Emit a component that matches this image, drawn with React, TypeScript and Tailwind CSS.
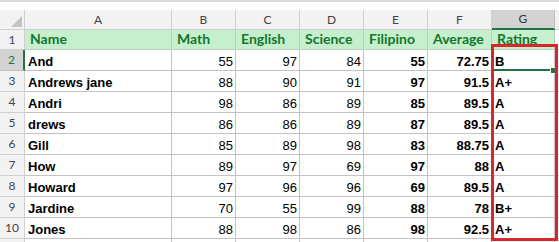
import React from "react";

type Row = [string, string, string, string, string, string, string];

const HEADERS: Row = ["Name", "Math", "English", "Science", "Filipino", "Average", "Rating"];

const ROWS: Row[] = [
  ["And", "55", "97", "84", "55", "72.75", "B"],
  ["Andrews jane", "88", "90", "91", "97", "91.5", "A+"],
  ["Andri", "98", "86", "89", "85", "89.5", "A"],
  ["drews", "86", "86", "89", "87", "89.5", "A"],
  ["Gill", "85", "89", "98", "83", "88.75", "A"],
  ["How", "89", "97", "69", "97", "88", "A"],
  ["Howard", "97", "96", "96", "69", "89.5", "A"],
  ["Jardine", "70", "55", "99", "88", "78", "B+"],
  ["Jones", "88", "98", "86", "98", "92.5", "A+"],
];

const LETTERS = ["A", "B", "C", "D", "E", "F", "G"];

// which data columns are bold / left aligned
const BOLD = [true, false, false, false, true, true, true];
const LEFT = [true, false, false, false, false, false, true];

const headCell = "border-r border-b border-[#d0d0d0] bg-[#f2f2f2] flex items-center justify-center text-[12px] text-[#444] font-['Lato',sans-serif]";
const gridCell = "border-r border-b border-[#c3c3c3] flex items-end pb-[1px] leading-[15px] text-[13px] text-black font-['Liberation_Sans',Arial,sans-serif] whitespace-nowrap";

export default function App() {
  return (
    <div className="relative w-[559px] h-[242px] overflow-hidden bg-white select-none">
      {/* strip above the column letters */}
      <div className="h-[10px] border-t-2 border-[#dadada] bg-white" />

      <div className="relative grid grid-cols-[25px_147px_64px_64px_64px_64px_64px_63px_1fr] grid-rows-[20px_20px_repeat(9,21px)_20px]">
        {/* corner */}
        <div className="border-r border-b border-[#d0d0d0] bg-[#f2f2f2] flex items-end justify-end pr-[2px] pb-[2px]">
          <svg width="11" height="11" viewBox="0 0 11 11">
            <polygon points="11,0 11,11 0,11" fill="#c4c4c4" />
          </svg>
        </div>
        {LETTERS.map((l) =>
          l === "G" ? (
            <div key={l} className="border-r border-b-2 border-r-[#c0c0c0] border-b-[#217346] bg-[#d3d3d3] flex items-center justify-center text-[12px] text-[#333] font-['Lato',sans-serif]">
              {l}
            </div>
          ) : (
            <div key={l} className={headCell}>
              {l}
            </div>
          )
        )}
        <div className="border-b border-[#d0d0d0] bg-[#f2f2f2]" />

        {/* row 1: titles */}
        <div className={headCell}>1</div>
        {HEADERS.map((h) => (
          <div
            key={h}
            className="border-r border-b border-[#b9cfbd] bg-[#c6efce] flex items-end pb-[2px] pl-[5px] leading-[17px] text-[14px] font-bold text-[#12772a] font-['Lato',sans-serif]"
          >
            {h}
          </div>
        ))}
        <div className="border-b border-[#c3c3c3]" />

        {/* data rows */}
        {ROWS.map((row, i) => (
          <React.Fragment key={row[0]}>
            {i === 0 ? (
              <div className="border-r-2 border-b border-r-[#217346] border-b-[#c0c0c0] bg-[#d3d3d3] flex items-center justify-center text-[12px] text-[#217346] font-['Lato',sans-serif]">
                2
              </div>
            ) : (
              <div className={headCell}>{i + 2}</div>
            )}
            {row.map((v, c) => (
              <div
                key={c}
                className={`${gridCell} ${BOLD[c] ? "font-bold" : ""} ${LEFT[c] ? "justify-start pl-[3px]" : "justify-end pr-[2px]"}`}
              >
                {v}
              </div>
            ))}
            <div className="border-b border-[#c3c3c3]" />
          </React.Fragment>
        ))}

        {/* next row peeking in */}
        <div className="border-r border-[#d0d0d0] bg-[#f2f2f2]" />
        {LETTERS.map((l) => (
          <div key={l} className="border-r border-[#c3c3c3]" />
        ))}
        <div />

        {/* active cell G2: bottom edge and fill handle */}
        <div className="absolute left-[494px] top-[59px] w-[58px] h-[2px] bg-[#217346]" />
        <div className="absolute left-[550px] top-[57px] w-[7px] h-[7px] bg-[#217346] border border-white" />
      </div>

      {/* red highlight box */}
      <div className="absolute left-[491px] top-[44px] w-[67px] h-[197px] border-[3px] border-[#d8262b]" />
    </div>
  );
}
